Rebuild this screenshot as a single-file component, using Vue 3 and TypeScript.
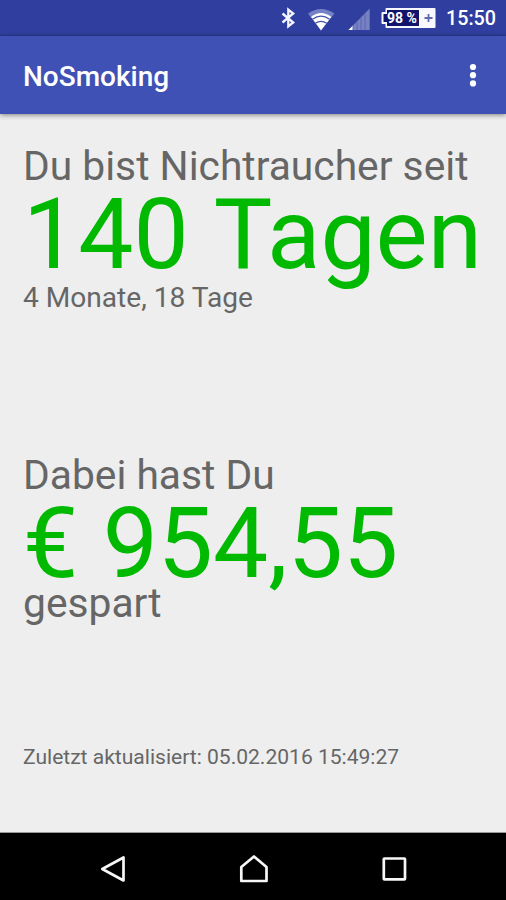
<script setup lang="ts">
const menuDots: number[] = [67, 75.2, 83.4]
const signalBars: number[] = [353, 357, 361, 365]
</script>

<template>
  <main class="screen">
    <header class="status">
      <svg class="icons" width="170" height="36" viewBox="275 0 170 36">
        <path d="M282.5 13.5 293.2 22.5 288.3 26.4V9.6L293.2 13.5 282.5 22.5" fill="none" stroke="#f4f5ff" stroke-width="2.3" />
        <path d="M308 13.6Q321 4.4 334.4 13.6L331 18Q321 10.5 311.4 18Z" fill="#7581c6" />
        <path d="M311 17Q321 9 331.4 17L321 30.5Z" fill="#fff" />
        <path d="M312.5 19.3Q321 12.8 329.6 19.3M315.4 23.3Q321 19.3 326.8 23.3" fill="none" stroke="#4653aa" stroke-width="1.3" />
        <path d="M369.7 8.5V30H348.5Z" fill="#7882c3" />
        <path d="M353 25.5V30H348.5Z" fill="#fff" />
        <path v-for="x in signalBars" :key="x" :d="`M${x} ${378 - x}V30`" stroke="#5865b3" stroke-width="1" />
        <path d="M386.5 8H434.5Q435.5 8 435.5 9V27Q435.5 28 434.5 28H386.5Q385.5 28 385.5 27V24H382.5Q381.5 24 381.5 23V13Q381.5 12 382.5 12H385.5V9Q385.5 8 386.5 8Z" fill="#f8f8ff" />
        <path d="M387 10H419V26H387V22H383.5V14H387Z" fill="#10156b" />
        <text x="387" y="23" class="percent" textLength="30" lengthAdjust="spacingAndGlyphs">98 %</text>
        <path d="M424.5 18H432.5M428.5 14V22" stroke="#6269a9" stroke-width="1.8" />
      </svg>
      <span class="clock">15:50</span>
    </header>
    <header class="bar">
      <h1>NoSmoking</h1>
      <svg width="8" height="28" viewBox="469 61 8 28"><circle v-for="y in menuDots" :key="y" cx="473" :cy="y" r="3.1" fill="#fff" /></svg>
    </header>
    <section class="content">
      <div class="since">
        <p class="label">Du bist Nichtraucher seit</p>
        <p class="value days">140 Tagen</p>
        <p class="detail">4 Monate, 18 Tage</p>
      </div>
      <div class="saved">
        <p class="label">Dabei hast Du</p>
        <p class="value">€ 954,55</p>
        <p class="label ending">gespart</p>
      </div>
      <p class="updated">Zuletzt aktualisiert: 05.02.2016 15:49:27</p>
    </section>
    <nav class="nav">
      <svg width="30" height="34" viewBox="98 852 30 34"><path d="M102.3 869 123.5 857.5V880.5Z" /></svg>
      <svg width="34" height="34" viewBox="237 852 34 34"><path d="M241.3 881V867L254 856.5 266.5 867V881Z" /></svg>
      <svg width="30" height="34" viewBox="379 852 30 34"><rect x="383.8" y="858.5" width="21.2" height="20.8" rx="0.6" /></svg>
    </nav>
  </main>
</template>

<style>
body { margin: 0; }
</style>
<style scoped>
.screen { width: 506px; height: 900px; display: flex; flex-direction: column; background: #eee; font-family: Roboto, sans-serif; overflow: hidden; }
h1, p { margin: 0; white-space: nowrap; }
svg { display: block; flex: none; }
.status { height: 36px; flex: none; background: #303f9f; display: flex; color: #fff; padding-left: 275px; box-shadow: inset 0 -1px #2c3a91; }
.percent { font-size: 14px; font-weight: 700; fill: #fff; }
.clock { font-size: 19.7px; line-height: 38px; font-weight: 500; padding-left: 1px; }
.bar { height: 78px; flex: none; background: #3f51b5; color: #fff; display: flex; align-items: center; justify-content: space-between; padding: 0 29px 0 23px; box-sizing: border-box; box-shadow: 0 1px 5px #0007; }
h1 { font-size: 28px; font-weight: 500; line-height: 32px; padding-top: 3px; }
.content { flex: 1; padding: 27px 23px 0; color: #666; }
.label { font-size: 40.75px; line-height: 50px; }
.value { font-size: 98.3px; line-height: 88px; color: #00b900; }
.days { word-spacing: 2.5px; }
.detail { font-size: 28.1px; line-height: 37px; }
.saved { margin-top: 134px; }
.ending { line-height: 30px; }
.updated { font-size: 21.05px; line-height: 26px; margin-top: 126px; }
.nav { height: 67px; flex: none; background: #000; display: flex; justify-content: space-between; padding: 19px 97px 0 98px; box-sizing: border-box; box-shadow: 0 -1px #999; }
.nav path, .nav rect { fill: none; stroke: #f7f7f7; stroke-width: 2.7; stroke-linejoin: round; }
</style>
